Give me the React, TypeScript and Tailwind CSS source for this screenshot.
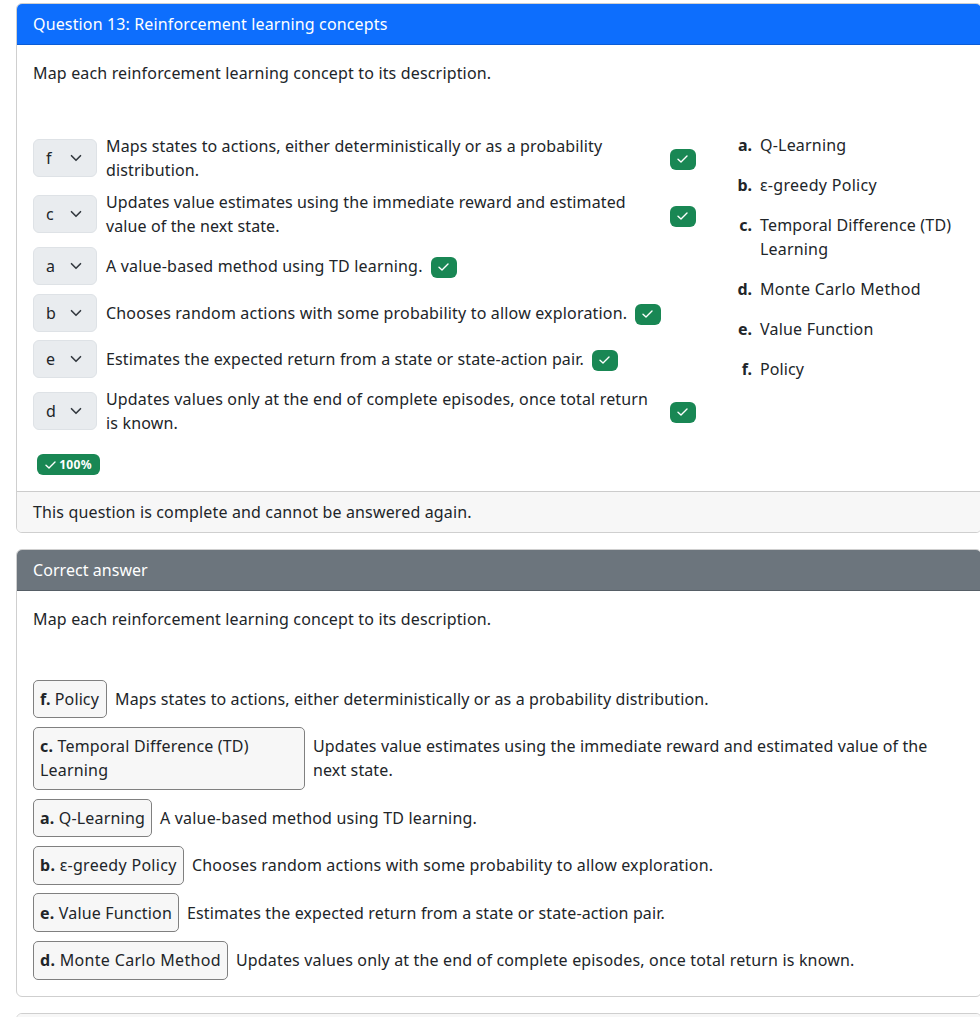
import type { ReactNode } from "react";

function Check() {
  return (
    <svg viewBox="0 0 12 10" className="h-[10px] w-[12px] shrink-0" fill="none" stroke="currentColor" strokeWidth="1.4" strokeLinecap="round" strokeLinejoin="round">
      <path d="M1 5.2 4 7.9 10 2.1" />
    </svg>
  );
}

function Select({ value }: { value: string }) {
  return (
    <div className="flex h-[38px] w-[64px] shrink-0 items-center rounded-md border border-[#dee2e6] bg-[#e9ecef] pl-3">
      <span className="w-[24px]">{value}</span>
      <svg viewBox="0 0 16 16" className="h-3 w-3" fill="none" stroke="#343a40" strokeWidth="2.2" strokeLinecap="round" strokeLinejoin="round">
        <path d="m2 5 6 6 6-6" />
      </svg>
    </div>
  );
}

const rows = [
  { v: "f", text: <>Maps states to actions, either deterministically or as a probability<br />distribution.</>, cls: "h-12", t: "w-[556px] tracking-[0.12px]", b: "top-[1px]" },
  { v: "c", text: <>Updates value estimates using the immediate reward and estimated<br />value of the next state.</>, cls: "mt-2 h-12", t: "w-[556px] tracking-[0.11px]", b: "top-[2px]" },
  { v: "a", text: <>A value-based method using TD learning.</>, cls: "mt-[9px] h-[38px]", t: "tracking-[0.18px]", b: "top-[1px]" },
  { v: "b", text: <>Chooses random actions with some probability to allow exploration.</>, cls: "mt-[9px] h-[38px]", t: "tracking-[0.18px]", b: "top-[1px]" },
  { v: "e", text: <>Estimates the expected return from a state or state-action pair.</>, cls: "mt-2 h-[38px]", t: "tracking-[0.13px]", b: "top-[1px]" },
  { v: "d", text: <>Updates values only at the end of complete episodes, once total return<br />is known.</>, cls: "mt-[9px] h-12", t: "w-[556px] tracking-[0.16px]", b: "top-[1px]" },
];

const options = [
  { k: "a.", text: <>Q-Learning</>, t: "tracking-[0.2px]" },
  { k: "b.", text: <>ε-greedy Policy</>, t: "tracking-[0.3px]" },
  { k: "c.", text: <>Temporal Difference (TD)<br />Learning</>, t: "tracking-[0.18px]" },
  { k: "d.", text: <>Monte Carlo Method</>, t: "tracking-[0.3px]" },
  { k: "e.", text: <>Value Function</>, t: "tracking-[0.2px]" },
  { k: "f.", text: <>Policy</>, t: "tracking-[0.1px]" },
];

const answers = [
  { k: "f.", label: <>Policy</>, text: <>Maps states to actions, either deterministically or as a probability distribution.</>, cls: "h-[38px]", w: "w-[74px] tracking-[0.1px]", t: "tracking-[0.12px]" },
  { k: "c.", label: <>Temporal Difference (TD)<br />Learning</>, text: <>Updates value estimates using the immediate reward and estimated value of the<br />next state.</>, cls: "mt-[9px] h-[63px]", w: "w-[272px] tracking-[0.18px] pb-[2px]", t: "tracking-[0.12px] pb-[2px]" },
  { k: "a.", label: <>Q-Learning</>, text: <>A value-based method using TD learning.</>, cls: "mt-[9px] h-[38px]", w: "w-[119px] tracking-[0.18px]", t: "tracking-[0.19px]" },
  { k: "b.", label: <>ε-greedy Policy</>, text: <>Chooses random actions with some probability to allow exploration.</>, cls: "mt-[9px] h-[39px]", w: "w-[151px] tracking-[0.3px] pb-[2px]", t: "tracking-[0.18px] pb-[2px]" },
  { k: "e.", label: <>Value Function</>, text: <>Estimates the expected return from a state or state-action pair.</>, cls: "mt-2 h-[39px]", w: "w-[146px] tracking-[0.18px]", t: "tracking-[0.13px]" },
  { k: "d.", label: <>Monte Carlo Method</>, text: <>Updates values only at the end of complete episodes, once total return is known.</>, cls: "mt-[9px] h-[39px]", w: "w-[195px] tracking-[0.32px] pb-[2px]", t: "tracking-[0.16px] pb-[2px]" },
];

function Card({ children, className }: { children?: ReactNode; className: string }) {
  return <section className={`w-[966px] shrink-0 overflow-hidden rounded-md border border-[#cfcfcf] bg-white ${className}`}>{children}</section>;
}

export default function App() {
  return (
    <main className="flex h-[1017px] w-full flex-col overflow-hidden bg-white pl-4 pt-[3px] font-['Noto_Sans','Open_Sans',sans-serif] text-base leading-6 whitespace-nowrap text-[#212529]">
      <Card className="h-[530px]">
        <header className="h-[41px] border-b border-[#0b5cd6] bg-[#0d6efd] px-4 pt-2 tracking-[0.14px] text-white">Question 13: Reinforcement learning concepts</header>
        <div className="h-[446px] px-4 pt-4">
          <p className="tracking-[0.16px]">Map each reinforcement learning concept to its description.</p>
          <div className="mt-[49px] flex">
            <div className="w-[663px]">
              {rows.map((r) => (
                <div key={r.v} className={`flex items-center ${r.cls}`}>
                  <Select value={r.v} />
                  <span className={`ml-[9px] shrink-0 ${r.t}`}>{r.text}</span>
                  <span className={`relative ml-2 flex h-[21px] w-[26px] shrink-0 items-center justify-center rounded-md bg-[#198754] text-white ${r.b}`}><Check /></span>
                </div>
              ))}
              <div className="mt-[19px] ml-1 flex h-[21px] w-[63px] items-center justify-center gap-[2px] rounded-md bg-[#198754] text-xs leading-none font-bold tracking-[0.3px] text-white">
                <Check />
                <span>100%</span>
              </div>
            </div>
            <dl className="-mt-px ml-9 grid grid-cols-[20px_auto] content-start gap-x-2 gap-y-4">
              {options.map((o) => (
                <div key={o.k} className="contents">
                  <dt className="text-right font-bold">{o.k}</dt>
                  <dd className={o.t}>{o.text}</dd>
                </div>
              ))}
            </dl>
          </div>
        </div>
        <footer className="h-[41px] border-t border-[#cccccc] bg-[#f7f7f7] px-4 pt-2 tracking-[0.15px]">This question is complete and cannot be answered again.</footer>
      </Card>
      <Card className="mt-4 h-[448px]">
        <header className="h-[41px] border-b border-[#565e66] bg-[#6c757d] px-4 pt-2 tracking-[0.05px] text-white">Correct answer</header>
        <div className="px-4 pt-4">
          <p className="tracking-[0.16px]">Map each reinforcement learning concept to its description.</p>
          <div className="mt-[49px]">
            {answers.map((a) => (
              <div key={a.k} className={`flex items-center ${a.cls}`}>
                <div className={`flex h-full shrink-0 items-center rounded-[5px] border border-[#808080] bg-[#f7f7f7] pl-[6px] ${a.w}`}>
                  <span><b>{a.k}</b> {a.label}</span>
                </div>
                <span className={`ml-2 ${a.t}`}>{a.text}</span>
              </div>
            ))}
          </div>
        </div>
      </Card>
      <Card className="mt-4 h-12">
        <header className="h-full bg-[#f7f7f7]" />
      </Card>
    </main>
  );
}
